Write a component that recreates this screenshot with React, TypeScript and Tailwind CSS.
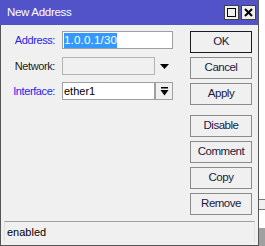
import React from 'react';

const font = { fontFamily: '"Liberation Sans", Arial, sans-serif' };

function WinButton({ label, primary = false }: { label: string; primary?: boolean }) {
  return (
    <div
      className={`flex h-[22px] w-[62px] items-center justify-center bg-[#f0f0f0] text-[11.5px] tracking-[-0.5px] text-[#1a1a40] ${
        primary ? 'border border-[#1c1c1c]' : 'border border-[#8a8a8a]'
      }`}
    >
      {label}
    </div>
  );
}

function Label({ text, blue = false }: { text: string; blue?: boolean }) {
  return (
    <div
      className={`w-[56px] pr-[2px] text-right text-[11px] tracking-[-0.4px] ${blue ? 'text-[#2424e8]' : 'text-[#202020]'}`}
    >
      {text}
    </div>
  );
}

export default function App() {
  return (
    <div className="flex h-[246px] w-[265px] overflow-hidden bg-white" style={font}>
      <div className="flex h-[246px] w-[259px] flex-col border-r border-b border-[#555] bg-[#5252c9]">
        <div className="flex h-[25px] shrink-0 items-center justify-between pl-[7px] pr-[2px]">
          <span className="text-[11.5px] tracking-[-0.3px] text-white">New Address</span>
          <div className="flex gap-[2px]">
            <div className="flex h-[15px] w-[15px] items-center justify-center border border-[#404040] bg-[#f0f0f0]">
              <div className="h-[9px] w-[9px] border-[1.5px] border-black" />
            </div>
            <div className="flex h-[15px] w-[15px] items-center justify-center border border-[#404040] bg-[#f0f0f0]">
              <svg width="9" height="9" viewBox="0 0 9 9">
                <path d="M1 1L8 8M8 1L1 8" stroke="black" strokeWidth="2" />
              </svg>
            </div>
          </div>
        </div>
        <div className="flex flex-1 flex-col border-l border-[#555] bg-[#f0f0f0]">
          <div className="flex flex-1">
            <div className="flex w-[189px] flex-col pt-[6px]">
              <div className="flex h-[18px] items-center gap-[5px]">
                <Label text="Address:" blue />
                <div className="flex h-[18px] w-[111px] items-center border border-[#a0a0a0] bg-white pl-[1px] text-[11.5px] tracking-[0.2px]">
                  <span className="bg-[#3399ff] leading-[15px] text-white">1.0.0.1/30</span>
                </div>
              </div>
              <div className="mt-[8px] flex h-[18px] items-center gap-[5px]">
                <Label text="Network:" />
                <div className="h-[18px] w-[93px] border border-[#b4b4b4] bg-[#f0f0f0]" />
                <svg width="9" height="5" viewBox="0 0 9 5">
                  <path d="M0 0H9L4.5 5Z" fill="black" />
                </svg>
              </div>
              <div className="mt-[7px] flex h-[18px] items-center gap-[5px]">
                <Label text="Interface:" blue />
                <div className="flex h-[18px] w-[93px] items-center border border-[#a0a0a0] bg-white pl-[1px] text-[11px] text-black">
                  ether1
                </div>
                <div className="-ml-[5px] flex h-[18px] w-[18px] items-center justify-center border border-[#a0a0a0] bg-[#f0f0f0]">
                  <svg width="9" height="9" viewBox="0 0 9 9">
                    <path d="M1 0H8V1.5H1Z M0.5 3H8.5L4.5 8.5Z" fill="black" />
                  </svg>
                </div>
              </div>
            </div>
            <div className="flex flex-col pt-[6px]">
              <WinButton label="OK" primary />
              <div className="mt-[4px]"><WinButton label="Cancel" /></div>
              <div className="mt-[4px]"><WinButton label="Apply" /></div>
              <div className="mt-[10px]"><WinButton label="Disable" /></div>
              <div className="mt-[4px]"><WinButton label="Comment" /></div>
              <div className="mt-[4px]"><WinButton label="Copy" /></div>
              <div className="mt-[4px]"><WinButton label="Remove" /></div>
            </div>
          </div>
          <div className="mx-[3px] mb-[3px] flex h-[21px] items-center border-t border-l border-r border-t-[#a0a0a0] border-l-[#e0e0e0] border-r-[#e0e0e0] pl-[2px] text-[11px] text-black">
            enabled
          </div>
        </div>
      </div>
      <div className="flex flex-1 flex-col">
        <div className="h-[199px] bg-white" />
        <div className="h-[11px] border-y border-[#777] bg-[#f0f0f0]" />
        <div className="h-[18px] bg-white" />
        <div className="flex-1 bg-[#a0a0a0]" />
      </div>
    </div>
  );
}
